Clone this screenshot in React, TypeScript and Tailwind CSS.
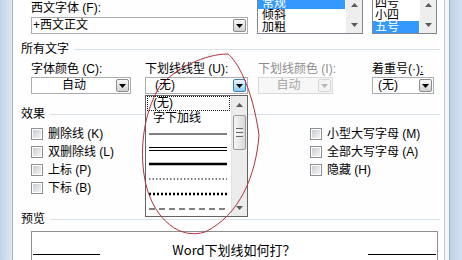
import React from "react";

// ─── Small parts ──────────────────────────────────────────────────────────────

function Arrow({ up = false, color = "#000" }: { up?: boolean; color?: string }) {
  return (
    <svg width="7" height="4" viewBox="0 0 7 4">
      <path d={up ? "M0 4h7L3.5 0z" : "M0 0h7L3.5 4z"} fill={color} />
    </svg>
  );
}

type Kind = "normal" | "hot" | "off";

function DropButton({ kind }: { kind: Kind }) {
  const cls =
    kind === "hot"
      ? "border-[#3c7fb1] bg-linear-to-b from-[#e8f6fd] to-[#8ccbee]"
      : kind === "off"
      ? "border-[#d6d6d6] bg-[#f4f4f4]"
      : "border-[#8c8c8c] bg-linear-to-b from-[#f8f8f8] to-[#d2d2d2]";
  return (
    <div className={`my-px mr-px flex w-[13px] items-center justify-center rounded-[2px] border ${cls}`}>
      <Arrow color={kind === "off" ? "#b8b8b8" : "#000"} />
    </div>
  );
}

function Combo({
  text,
  className,
  textClass = "",
  kind = "normal",
}: {
  text: React.ReactNode;
  className: string;
  textClass?: string;
  kind?: Kind;
}) {
  const off = kind === "off";
  return (
    <div className={`flex h-[17px] border ${off ? "border-[#d9d9d9] bg-[#f7f7f7]" : "border-[#abadb3] bg-white"} ${className}`}>
      <div className={`flex flex-1 items-center text-[12px] leading-[15px] ${textClass} ${off ? "text-[#a6a6a6]" : "text-black"}`}>
        {text}
      </div>
      <DropButton kind={kind} />
    </div>
  );
}

function ListBox({ items, selected, className, textPad }: { items: string[]; selected: number; className: string; textPad: string }) {
  return (
    <div className={`flex h-[34px] overflow-hidden border-x border-b border-[#828790] bg-white ${className}`}>
      <div className="flex flex-1 flex-col justify-end overflow-hidden pr-px">
        {items.map((it, i) => (
          <div
            key={i}
            className={`flex h-[12px] shrink-0 items-center overflow-hidden text-[12px] leading-[12px] ${textPad} ${
              i === selected ? "bg-[#3399ff] text-white" : "text-black"
            }`}
          >
            {it}
          </div>
        ))}
      </div>
      <div className="flex w-[16px] flex-col justify-end bg-[#eeeeee]">
        <div className="flex h-[17px] shrink-0 items-center justify-center">
          <Arrow up color="#5a5a5a" />
        </div>
        <div className="h-[3px] shrink-0" />
        <div className="flex h-[17px] shrink-0 items-center justify-center">
          <Arrow color="#5a5a5a" />
        </div>
      </div>
    </div>
  );
}

function Group({ title }: { title: string }) {
  return (
    <div className="flex h-[14px] items-center pl-[8px] pr-[4px]">
      <span className="text-[12px] leading-[14px] text-black">{title}</span>
      <span className="ml-[5px] h-px flex-1 bg-[#d8e0e8]" />
    </div>
  );
}

function Check({ label }: { label: string }) {
  return (
    <div className="flex h-[18px] items-center">
      <span className="block h-[12px] w-[12px] border border-[#8e8f8f] bg-white p-px">
        <span className="block h-full w-full bg-linear-to-br from-[#c9cdd3] to-[#f4f4f4]" />
      </span>
      <span className="ml-[5px] whitespace-nowrap text-[12px] leading-[14px] text-black">{label}</span>
    </div>
  );
}

function Sample({ d, w = 1 }: { d?: string; w?: number }) {
  return (
    <svg width="78" height="6" viewBox="0 0 78 6">
      <line x1="0" y1="3" x2="78" y2="3" stroke="#000" strokeWidth={w} strokeDasharray={d} />
    </svg>
  );
}

// ─── Underline style dropdown (open) ──────────────────────────────────────────

function UnderlineMenu() {
  return (
    <div className="absolute left-[132px] top-[95px] flex h-[122px] w-[103px] border border-[#646464] bg-white">
      <div className="flex w-[85px] flex-col">
        <div className="mx-px flex h-[15px] items-center border border-dotted border-[#1a1a1a] pl-[5px] text-[12px] leading-[13px]">
          (无)
        </div>
        <div className="flex h-[15px] items-center pl-[7px] text-[12px] leading-[15px]">字下加线</div>
        <div className="flex h-[15px] items-center pl-[3px]">
          <Sample />
        </div>
        <div className="flex h-[15px] items-center pl-[3px]">
          <svg width="78" height="6" viewBox="0 0 78 6">
            <line x1="0" y1="1.5" x2="78" y2="1.5" stroke="#000" />
            <line x1="0" y1="4.5" x2="78" y2="4.5" stroke="#000" />
          </svg>
        </div>
        <div className="flex h-[15px] items-center pl-[3px]">
          <Sample w={2.5} />
        </div>
        <div className="flex h-[15px] items-center pl-[3px]">
          <Sample d="1.5 2" />
        </div>
        <div className="flex h-[15px] items-center pl-[3px]">
          <Sample d="2 2" w={2.5} />
        </div>
        <div className="flex h-[15px] items-center pl-[3px]">
          <Sample d="6 4" />
        </div>
      </div>
      <div className="flex w-[16px] flex-col border-l border-[#e2e2e2] bg-[#ececec]">
        <div className="flex h-[17px] items-center justify-center">
          <Arrow up color="#5a5a5a" />
        </div>
        <div className="mx-px mt-[2px] flex h-[35px] items-center justify-center rounded-[2px] border border-[#9a9a9a] bg-linear-to-r from-[#f6f6f6] to-[#d9d9d9]">
          <div className="flex flex-col gap-px">
            <span className="block h-px w-[7px] bg-[#6a6a6a]" />
            <span className="block h-px w-[7px] bg-[#ffffff]" />
            <span className="block h-px w-[7px] bg-[#6a6a6a]" />
            <span className="block h-px w-[7px] bg-[#ffffff]" />
            <span className="block h-px w-[7px] bg-[#6a6a6a]" />
          </div>
        </div>
        <div className="flex-1" />
        <div className="flex h-[17px] items-center justify-center">
          <Arrow color="#5a5a5a" />
        </div>
      </div>
    </div>
  );
}

// ─── Page ─────────────────────────────────────────────────────────────────────

export default function App() {
  return (
    <div className="relative flex h-[260px] w-[462px] overflow-hidden bg-white font-['Liberation_Sans','Noto_Sans_CJK_SC',sans-serif] text-black">
      {/* left window frame */}
      <div className="w-[13px] border-r border-[#a3b3c7] bg-linear-to-r from-[#c3d3e7] to-[#dfe8f3]" />

      {/* dialog body */}
      <div className="relative flex w-[431px] flex-col bg-[#fefefe]">
        {/* font / style / size row */}
        <div className="flex h-[34px] pl-[18px]">
          <div className="flex w-[217px] flex-col">
            <div className="h-[17px] pt-[1px] text-[12px] leading-[14px]">西文字体 (F):</div>
            <Combo text="+西文正文" className="w-[217px]" textClass="pl-[1px]" />
          </div>
          <ListBox items={["常规", "倾斜", "加粗"]} selected={0} className="ml-[9px] w-[106px]" textPad="pl-[4px]" />
          <ListBox items={["四号", "小四", "五号"]} selected={2} className="ml-[9px] w-[65px]" textPad="pl-[2px]" />
        </div>

        <div className="mt-[8px]">
          <Group title="所有文字" />
        </div>

        {/* colour / underline row */}
        <div className="mt-[6px] flex pl-[18px]">
          <div className="flex w-[100px] flex-col">
            <div className="h-[15px] whitespace-nowrap text-[12px] leading-[14px]">字体颜色 (C):</div>
            <Combo text="自动" className="w-[100px]" textClass="justify-center" />
          </div>
          <div className="ml-[14px] flex w-[103px] flex-col">
            <div className="h-[15px] whitespace-nowrap text-[12px] leading-[14px]">下划线线型 (U):</div>
            <Combo text="(无)" className="w-[103px]" textClass="pl-[9px]" kind="hot" />
          </div>
          <div className="ml-[10px] flex w-[75px] flex-col">
            <div className="h-[15px] whitespace-nowrap text-[12px] leading-[14px] text-[#8d8d8d]">下划线颜色 (I):</div>
            <Combo text="自动" className="w-[75px]" textClass="justify-center" kind="off" />
          </div>
          <div className="ml-[39px] flex w-[62px] flex-col">
            <div className="h-[15px] whitespace-nowrap text-[12px] leading-[14px]">
              着重号(·)<span className="underline">:</span>
            </div>
            <Combo text="(无)" className="w-[62px]" textClass="pl-[5px]" />
          </div>
        </div>

        <div className="mt-[13px]">
          <Group title="效果" />
        </div>

        {/* effects */}
        <div className="mt-[4px] flex pl-[18px]">
          <div className="flex w-[279px] flex-col">
            <Check label="删除线 (K)" />
            <Check label="双删除线 (L)" />
            <Check label="上标 (P)" />
            <Check label="下标 (B)" />
          </div>
          <div className="flex flex-col">
            <Check label="小型大写字母 (M)" />
            <Check label="全部大写字母 (A)" />
            <Check label="隐藏 (H)" />
          </div>
        </div>

        <div className="mt-[15px]">
          <Group title="预览" />
        </div>

        {/* preview */}
        <div className="ml-[18px] mt-[5px] h-[40px] w-[407px] shrink-0 border border-[#8f8f8f] bg-white px-px pt-[9px]">
          <div className="flex h-[17px] items-end justify-between">
            <span className="mb-[3px] block h-px w-[67px] bg-black" />
            <span className="font-['Noto_Sans_CJK_SC',sans-serif] text-[13px] leading-[17px]">Word下划线如何打？</span>
            <span className="mb-[3px] block h-px w-[68px] bg-black" />
          </div>
        </div>

        <UnderlineMenu />
      </div>

      {/* right window frame */}
      <div className="flex w-[18px] border-l border-[#c6c9cd]">
        <div className="w-[4px] bg-[#f3f6fa]" />
        <div className="flex-1 border-l border-[#9fb1c7] bg-linear-to-r from-[#c0d1e7] to-[#d3e0ef]" />
      </div>

      {/* hand-drawn red mark */}
      <svg className="pointer-events-none absolute left-0 top-0" width="462" height="260" viewBox="0 0 462 260">
        <path
          d="M228 54 C236 60, 252 85, 259 135 C256 175, 240 215, 205 232 C180 240, 155 220, 146 185 C139 155, 142 115, 160 86 C176 68, 205 54, 228 54 Z"
          fill="none"
          stroke="#b0303e"
          strokeWidth="1"
        />
      </svg>
    </div>
  );
}
